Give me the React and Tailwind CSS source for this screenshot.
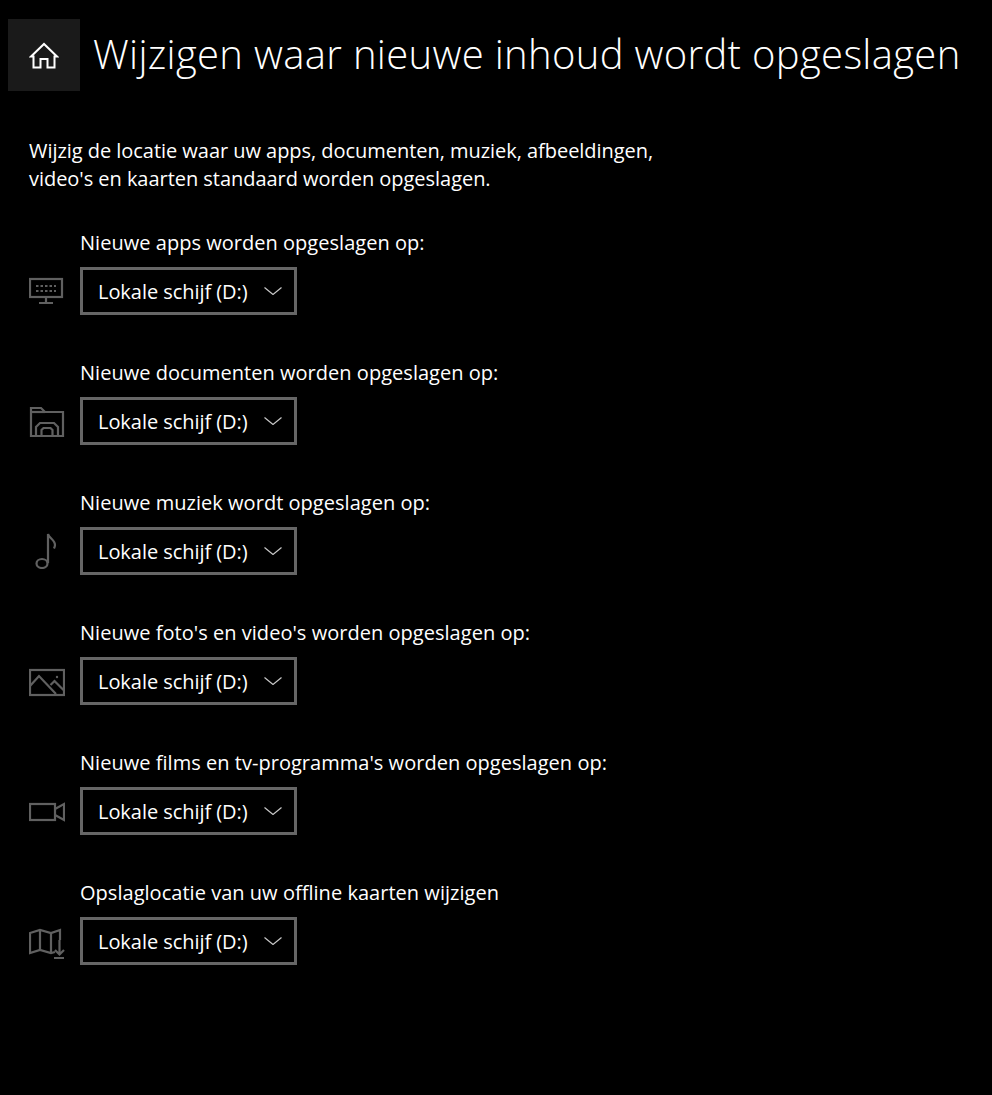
const FONT = { fontFamily: '"Open Sans", "Noto Sans", sans-serif' };

const HomeIcon = () => (
  <svg width="30" height="30" viewBox="0 0 30 30" fill="none" stroke="#fff" strokeWidth="2">
    <path d="M2 16.5 15 4l13 12.5h-2.5V27.5h-7V19h-7v8.5h-7V16.5z" strokeLinejoin="miter" />
  </svg>
);

const Chevron = () => (
  <svg width="18" height="8" viewBox="0 0 18 8" fill="none" stroke="#c8c8c8" strokeWidth="1.2">
    <path d="M.5.5 9 7.5 17.5.5" />
  </svg>
);

const Svg = ({ children }) => (
  <svg width="36" height="36" viewBox="0 0 36 36" fill="none" stroke="#606060" strokeWidth="2.2">
    {children}
  </svg>
);

const MonitorIcon = () => (
  <Svg>
    <rect x="1" y="6" width="32" height="18" />
    <path d="M17 24v5M10 30h14" />
    <path d="M7 13h20M7 18h20" strokeWidth="2" strokeDasharray="2.500 2" />
  </Svg>
);

const FolderIcon = () => (
  <Svg>
    <path d="M6 33H2V5h10l4 4h18v24h-4" />
    <path d="M2 9h14" />
    <path d="M7 34V24l4-4h14l4 4v10" />
    <path d="M12.500 34v-7l2-2h7l2 2v7M7 33h22" />
  </Svg>
);

const MusicIcon = () => (
  <Svg>
    <ellipse cx="13" cy="30.500" rx="5.500" ry="4.500" />
    <path d="M19 30V1c1 4 7 6 7 11 0 1-.3 2-1 3.500" />
  </Svg>
);

const PictureIcon = () => (
  <Svg>
    <rect x="1" y="7" width="34" height="25" />
    <path d="M1 23l9-10 17 18M21.500 22l4-4 9 9" />
    <circle cx="28" cy="14" r="1.200" fill="#606060" stroke="none" />
  </Svg>
);

const CameraIcon = () => (
  <Svg>
    <rect x="1" y="11" width="25" height="16" />
    <path d="M26 16l9-5v16l-9-5" />
  </Svg>
);

const MapIcon = () => (
  <Svg>
    <path d="M31 17V7l-9 3-11-3-10 3v20l10-3 11 3 4-1" />
    <path d="M11 7v20M22 10v20" />
    <path d="M30.500 17v14M26 27l4.500 4.500L35 27M25 35h10" />
  </Svg>
);

const rows = [
  { label: 'Nieuwe apps worden opgeslagen op:', icon: MonitorIcon },
  { label: 'Nieuwe documenten worden opgeslagen op:', icon: FolderIcon },
  { label: 'Nieuwe muziek wordt opgeslagen op:', icon: MusicIcon },
  { label: "Nieuwe foto's en video's worden opgeslagen op:", icon: PictureIcon },
  { label: "Nieuwe films en tv-programma's worden opgeslagen op:", icon: CameraIcon },
  { label: 'Opslaglocatie van uw offline kaarten wijzigen', icon: MapIcon },
];

export default function App() {
  return (
    <div className="min-h-[1095px] w-[992px] overflow-hidden bg-black pt-[19px] text-white" style={FONT}>
      {/* Header */}
      <div className="flex h-[72px] items-center pl-2">
        <button type="button" className="flex h-[72px] w-[72px] items-center justify-center bg-[#1a1a1a]">
          <HomeIcon />
        </button>
        <h1 className="mb-[2px] ml-[13px] whitespace-nowrap text-[40px] font-light leading-[70px] tracking-[0.33px]">
          Wijzigen waar nieuwe inhoud wordt opgeslagen
        </h1>
      </div>

      <p className="mt-[46px] pl-[29px] text-[20px] leading-[28px] tracking-[-0.04px]">
        Wijzig de locatie waar uw apps, documenten, muziek, afbeeldingen,
        <br />
        video's en kaarten standaard worden opgeslagen.
      </p>

      <div className="mt-[36px] flex flex-col gap-[44px] pl-[29px]">
        {rows.map(({ label, icon: Icon }) => (
          <div key={label}>
            <div className="pl-[51px] text-[20px] leading-[28px] tracking-[0.03px]">{label}</div>
            <div className="mt-[10px] flex items-center">
              <div className="flex h-9 w-[51px] items-center">
                <Icon />
              </div>
              <div className="flex h-12 w-[217px] items-center justify-between border-[3px] border-[#666666] pl-[15px] pr-[12px] text-[20px] tracking-[-0.05px]">
                <span className="pt-[2px]">Lokale schijf (D:)</span>
                <Chevron />
              </div>
            </div>
          </div>
        ))}
      </div>
    </div>
  );
}
